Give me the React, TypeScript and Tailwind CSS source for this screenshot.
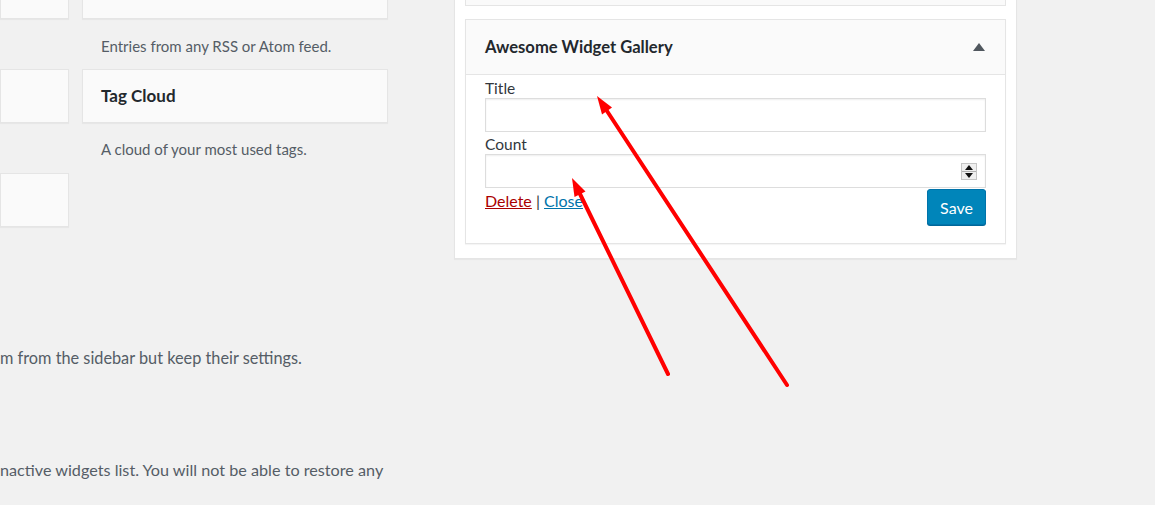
export default function App() {
  return (
    <div className="relative flex w-[1155px] h-[505px] overflow-hidden bg-[#f1f1f1] font-['Lato',sans-serif] text-[#555d66]">
      {/* Available widgets */}
      <div className="w-[454px] shrink-0 flex flex-col">
        <div className="flex gap-[13px] mt-[-35px]">
          <div className="w-[69px] flex flex-col gap-[50px]">
            <div className="h-[54px] bg-[#fafafa] border border-[#e5e5e5] shadow-[0_1px_1px_rgba(0,0,0,0.04)]" />
            <div className="h-[54px] bg-[#fafafa] border border-[#e5e5e5] shadow-[0_1px_1px_rgba(0,0,0,0.04)]" />
            <div className="h-[54px] bg-[#fafafa] border border-[#e5e5e5] shadow-[0_1px_1px_rgba(0,0,0,0.04)]" />
          </div>
          <div className="w-[306px] flex flex-col">
            <div className="h-[54px] bg-[#fafafa] border border-[#e5e5e5] shadow-[0_1px_1px_rgba(0,0,0,0.04)]" />
            <div className="h-[50px] pl-[19px] pt-[17px] text-[15px] leading-[20px]">
              Entries from any RSS or Atom feed.
            </div>
            <div className="h-[54px] flex items-center px-[18px] bg-[#fafafa] border border-[#e5e5e5] shadow-[0_1px_1px_rgba(0,0,0,0.04)]">
              <h3 className="text-[17px] font-bold text-[#23282d]">Tag Cloud</h3>
            </div>
            <div className="h-[50px] pl-[19px] pt-[16px] text-[15px] leading-[20px]">
              A cloud of your most used tags.
            </div>
          </div>
        </div>
        <p className="mt-[121px] text-[16.3px] leading-[20px] whitespace-nowrap">
          m from the sidebar but keep their settings.
        </p>
        <p className="mt-[92px] text-[16.2px] leading-[20px] whitespace-nowrap">
          nactive widgets list. You will not be able to restore any
        </p>
      </div>

      {/* Sidebar area */}
      <div className="w-[563px] shrink-0 self-start mt-[-41px] bg-white border border-[#e5e5e5] px-[10px] pb-[14px] flex flex-col gap-[13px] shadow-[0_1px_1px_rgba(0,0,0,0.04)]">
        <div className="h-[46px] bg-[#fafafa] border border-[#e5e5e5] border-t-0" />
        <div className="border border-[#e5e5e5] shadow-[0_1px_1px_rgba(0,0,0,0.04)]">
          <div className="h-[55px] flex items-center justify-between pl-[19px] pr-[20px] bg-[#fafafa] border-b border-[#e5e5e5]">
            <h3 className="text-[16.6px] font-bold text-[#23282d]">Awesome Widget Gallery</h3>
            <svg width="12" height="8" viewBox="0 0 12 8">
              <path d="M6 0 L12 8 L0 8 Z" fill="#50575e" />
            </svg>
          </div>
          <div className="bg-white px-[19px] pt-[4px] pb-[18px] flex flex-col text-[15.5px] leading-[19px] text-[#32373c]">
            <label>Title</label>
            <input className="h-[34px] border border-[#dddddd] shadow-[inset_0_1px_2px_rgba(0,0,0,0.07)] outline-none" />
            <label className="mt-[3px]">Count</label>
            <div className="relative h-[34px] border border-[#dddddd] shadow-[inset_0_1px_2px_rgba(0,0,0,0.07)]">
              <div className="absolute right-[8px] top-[8px] w-[16px] h-[17px] bg-[#efefef] border border-[#c5c5c5] flex flex-col">
                <div className="flex-1 flex items-center justify-center border-b border-[#b0b0b0]">
                  <svg width="8" height="5" viewBox="0 0 8 5">
                    <path d="M4 0 L8 5 L0 5 Z" fill="#111" />
                  </svg>
                </div>
                <div className="flex-1 flex items-center justify-center">
                  <svg width="8" height="5" viewBox="0 0 8 5">
                    <path d="M0 0 L8 0 L4 5 Z" fill="#111" />
                  </svg>
                </div>
              </div>
            </div>
            <div className="flex justify-between items-start">
              <div className="mt-[3px] text-[16px]">
                <a href="#" className="text-[#a00] underline">Delete</a>
                <span> | </span>
                <a href="#" className="text-[#0073aa] underline">Close</a>
              </div>
              <button className="mt-[1px] h-[36px] w-[59px] rounded-[3px] bg-[#0085ba] border border-[#0073aa] shadow-[0_1px_0_#006799] text-white text-[16px]">
                Save
              </button>
            </div>
          </div>
        </div>
      </div>

      {/* Annotation arrows */}
      <svg className="absolute inset-0 pointer-events-none" width="1155" height="505">
        <line x1="668" y1="374" x2="580" y2="194" stroke="#ff0000" strokeWidth="4" strokeLinecap="round" />
        <polygon points="572,178 585.5,191.5 574.5,197" fill="#ff0000" />
        <line x1="787" y1="385" x2="607" y2="111" stroke="#ff0000" strokeWidth="4" strokeLinecap="round" />
        <polygon points="597,96 612,107.5 602,114.5" fill="#ff0000" />
      </svg>
    </div>
  );
}
